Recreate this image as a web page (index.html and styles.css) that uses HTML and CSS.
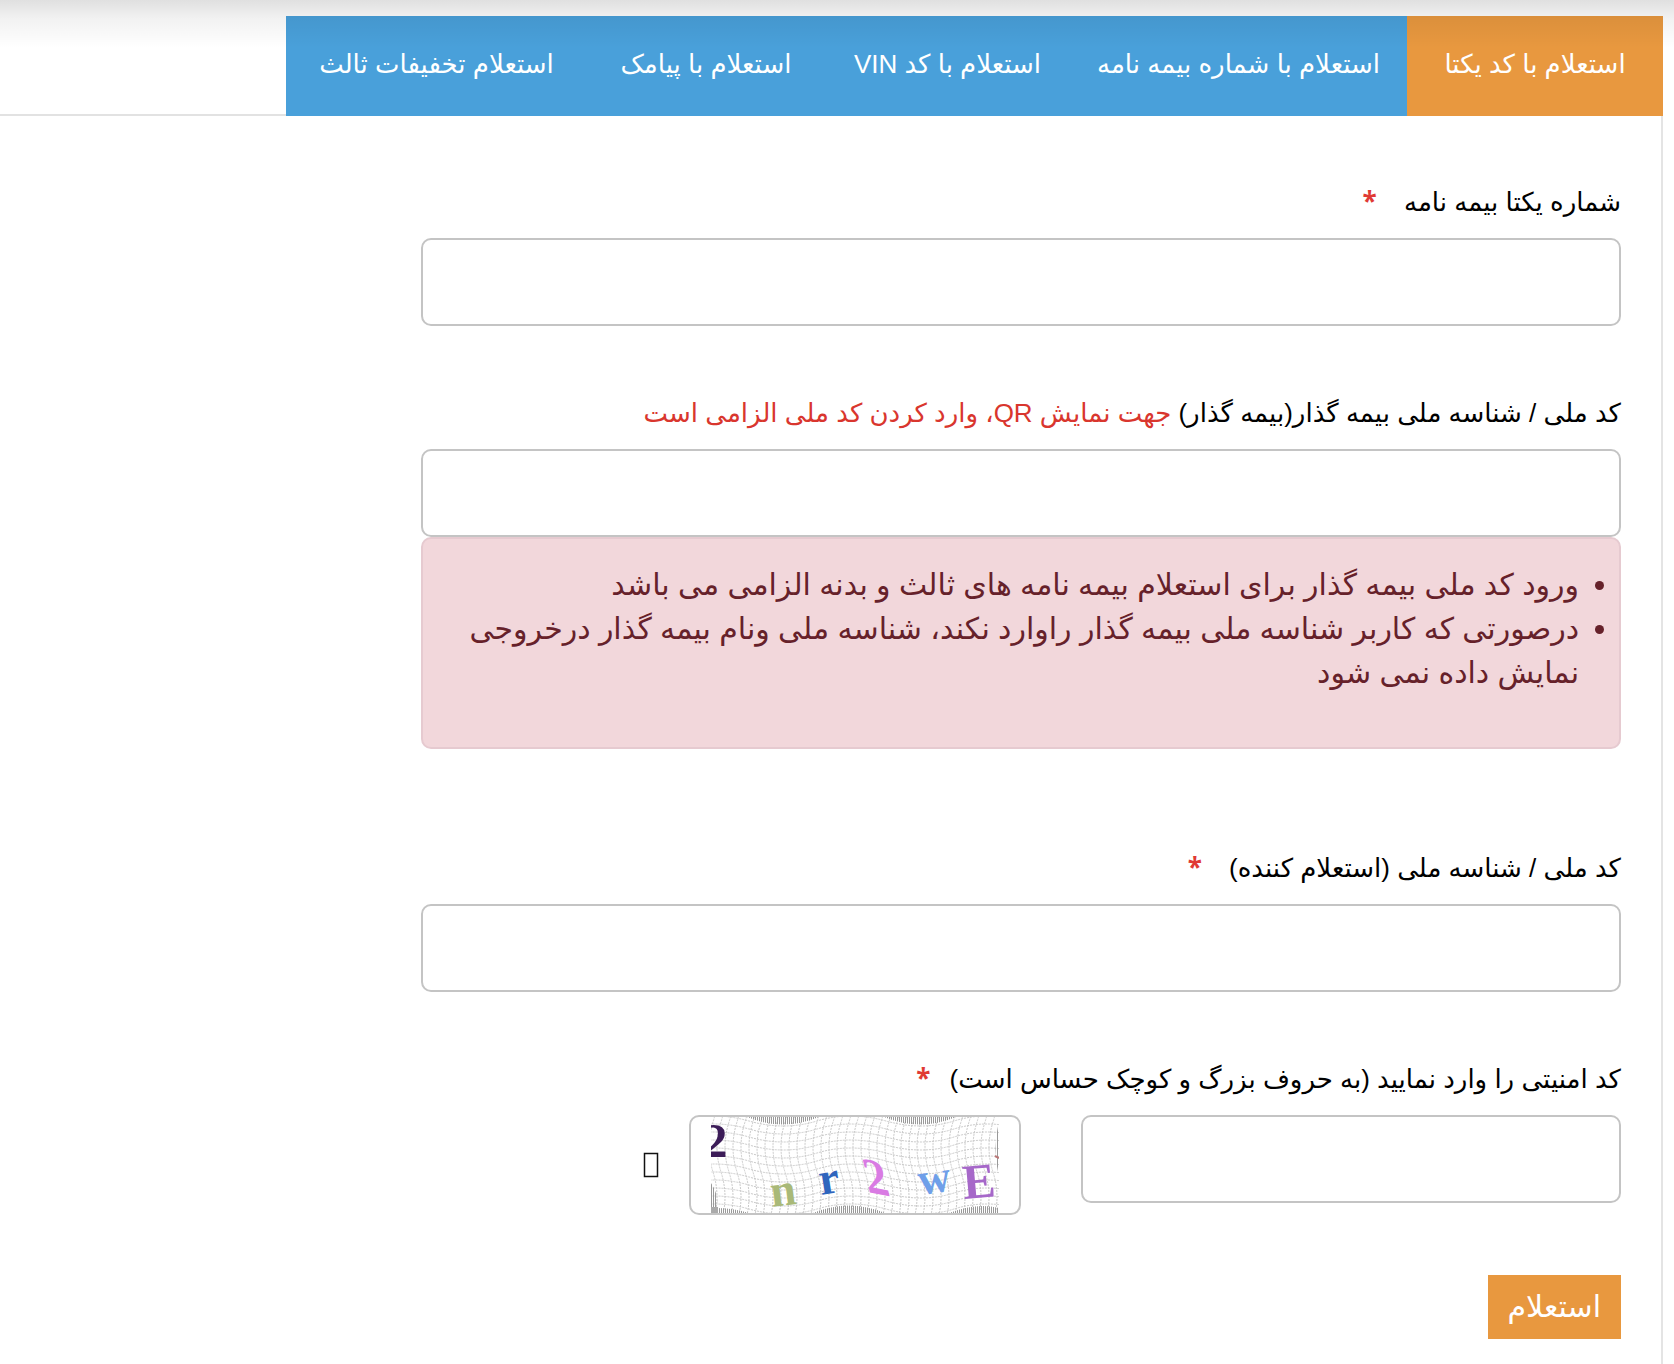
FILE: index.html
```html
<!DOCTYPE html>
<html lang="fa" dir="rtl">
<head>
<meta charset="utf-8">
<meta name="viewport" content="width=device-width, initial-scale=1">
<title>استعلام بیمه نامه</title>
<link rel="stylesheet" href="styles.css">
</head>
<body>
<main class="page">
  <nav class="tabs">
    <a class="tab tab-active" href="#unique">استعلام با کد یکتا</a>
    <a class="tab" href="#policy">استعلام با شماره بیمه نامه</a>
    <a class="tab" href="#vin">استعلام با کد VIN</a>
    <a class="tab" href="#sms">استعلام با پیامک</a>
    <a class="tab" href="#discount">استعلام تخفیفات ثالث</a>
  </nav>
  <div class="panel">
    <form class="form">
      <div class="field">
        <label class="label" for="unique-code">شماره یکتا بیمه نامه <span class="star star-far">*</span></label>
        <input class="input" id="unique-code" type="text">
      </div>
      <div class="field">
        <label class="label" for="holder-id">کد ملی / شناسه ملی بیمه گذار(بیمه گذار) <span class="hint">جهت نمایش QR، وارد کردن کد ملی الزامی است</span></label>
        <input class="input" id="holder-id" type="text">
        <div class="alert">
          <ul class="alert-list">
            <li>ورود کد ملی بیمه گذار برای استعلام بیمه نامه های ثالث و بدنه الزامی می باشد</li>
            <li>درصورتی که کاربر شناسه ملی بیمه گذار راوارد نکند، شناسه ملی ونام بیمه گذار درخروجی نمایش داده نمی شود</li>
          </ul>
        </div>
      </div>
      <div class="field field-after-alert">
        <label class="label" for="requester-id">کد ملی / شناسه ملی (استعلام کننده) <span class="star star-far">*</span></label>
        <input class="input" id="requester-id" type="text">
      </div>
      <div class="field field-captcha">
        <label class="label" for="security-code">کد امنیتی را وارد نمایید (به حروف بزرگ و کوچک حساس است) <span class="star">*</span></label>
        <div class="captcha-row">
          <input class="input captcha-input" id="security-code" type="text">
          <div class="captcha-box">
            <svg class="captcha" viewBox="0 0 288 96" direction="ltr" aria-hidden="true">
              <defs>
                <pattern id="hatch" width="2" height="2" patternUnits="userSpaceOnUse"><path d="M.5 0V2" stroke="#999"/></pattern>
                <path id="h" d="M-31 0Q3 -10 38 0T106 0T175 0T243 0T311 0"/>
                <path id="v" d="M0 -45Q8 -20 0 5T0 55T0 105"/>
                <g id="h4"><use href="#h"/><use href="#h" y="8"/><use href="#h" y="16"/><use href="#h" y="24"/></g>
                <g id="v6"><use href="#v"/><use href="#v" x="8"/><use href="#v" x="16"/><use href="#v" x="24"/><use href="#v" x="32"/><use href="#v" x="40"/></g>
              </defs>
              <g fill="none" stroke="#cacaca" stroke-dasharray="2 1">
                <use href="#h4" y="4"/><use href="#h4" y="36"/><use href="#h4" y="68"/>
                <use href="#v6" x="2"/><use href="#v6" x="50"/><use href="#v6" x="98"/><use href="#v6" x="146"/><use href="#v6" x="194"/><use href="#v6" x="242"/>
              </g>
              <g fill="url(#hatch)">
                <path d="M36 0Q72 15 108 0ZM173 0Q209 15 245 0Z"/>
                <path d="M0 66Q9 80 5 91Q22 91 38 96H0ZM102 96Q138 81 174 96ZM238 96Q266 85 288 91V96Z"/>
                <path d="M288 4Q281 32 288 60Z"/>
              </g>
              <path d="M0 90h7v6H0z" fill="#aaa"/>
              <path d="M284 39l4 2" stroke="#b77" stroke-width="2"/>
              <g class="captcha-text">
                <text x="-8" y="40" font-size="49" fill="#3c1c58">2</text>
                <text transform="translate(61 90) rotate(-7)" font-size="46" fill="#a9b978">n</text>
                <text transform="translate(110 78) rotate(-9)" font-size="46" fill="#2f65bd">r</text>
                <text transform="translate(157 75) rotate(11) skewX(25)" font-size="48" fill="#d97be3">2</text>
                <text transform="translate(209 78) rotate(-8)" font-size="45" fill="#6f9fe9">w</text>
                <text transform="translate(253 82) rotate(-5)" font-size="49" fill="#a668c9">E</text>
              </g>
            </svg>
          </div>
          <button class="refresh" type="button" aria-label="تصویر جدید">
            <svg class="refresh-icon" viewBox="0 0 16 26" aria-hidden="true"><path d="M1.5 1.5h13v23h-13z" fill="none" stroke="#111" stroke-width="1.5"/></svg>
          </button>
        </div>
      </div>
      <button class="submit" type="submit">استعلام</button>
    </form>
  </div>
</main>
</body>
</html>
```
FILE: styles.css
```css
* {
  box-sizing: border-box;
}

body {
  margin: 0;
  background: #fff;
  color: #000;
  font-family: "Liberation Sans", "DejaVu Sans", sans-serif;
  font-size: 26px;
  line-height: 40px;
}

/* Shadow cast by the page header */
body::before {
  content: "";
  position: absolute;
  inset: 0 0 auto;
  height: 48px;
  background: linear-gradient(rgba(0, 0, 0, 0.12), rgba(0, 0, 0, 0.05) 40%, rgba(0, 0, 0, 0));
  pointer-events: none;
}

.page {
  display: flex;
  flex-direction: column;
  min-height: 100vh;
  padding-top: 16px;
  padding-right: 11px;
}

.tabs {
  display: grid;
  grid-template-columns: 256fr 337fr 245fr 238fr 301fr 286fr;
  box-shadow: inset 0 -2px #e2e2e2;
}

.tab {
  padding: 28px 0 32px;
  background: #49a0da;
  color: #fff;
  text-align: center;
  white-space: nowrap;
  text-decoration: none;
}

.tab-active {
  background: #e8983f;
}

.panel {
  flex: 1;
  padding: 66px 40px 24px 0;
  border-right: 2px solid #e4e4e4;
}

.form {
  width: 74%;
}

.field {
  margin-bottom: 67px;
}

.field-after-alert {
  margin-top: 99px;
}

.field-captcha {
  margin-bottom: 60px;
}

.label {
  display: block;
  margin-bottom: 16px;
  white-space: nowrap;
}

.star {
  margin-right: 12px;
  color: #e03a34;
  font-family: "Open Sans", sans-serif;
  font-weight: 700;
  line-height: 24px;
}

.star-far {
  margin-right: 20px;
}

.hint {
  color: #d9362e;
}

.input {
  display: block;
  width: 100%;
  height: 88px;
  padding: 0 20px;
  border: 2px solid #c4c4c4;
  border-radius: 10px;
  background: #fff;
  font: inherit;
}

.alert {
  padding: 24px 12px 52px 40px;
  border: 2px solid #e6cad0;
  border-radius: 10px;
  background: #f2d7db;
  color: #66212a;
  font-size: 30px;
  line-height: 44px;
}

.alert-list {
  margin: 0;
  padding: 0 28px 0 0;
}

.captcha-row {
  display: flex;
  align-items: flex-start;
}

.captcha-input {
  width: 45%;
}

.captcha-box {
  display: flex;
  margin-right: 60px;
  padding: 0 20px;
  border: 2px solid #c4c4c4;
  border-radius: 10px;
}

.captcha {
  width: 288px;
  height: 96px;
}

.captcha-text {
  font-family: "Liberation Serif", serif;
  font-weight: 700;
}

.refresh {
  align-self: center;
  margin-right: 30px;
  padding: 0;
  border: 0;
  background: none;
}

.refresh-icon {
  display: block;
  width: 16px;
  height: 26px;
}

.submit {
  display: block;
  height: 64px;
  padding: 0 20px;
  border: 0;
  background: #e8983f;
  color: #fff;
  font: inherit;
  font-size: 30px;
}
```
